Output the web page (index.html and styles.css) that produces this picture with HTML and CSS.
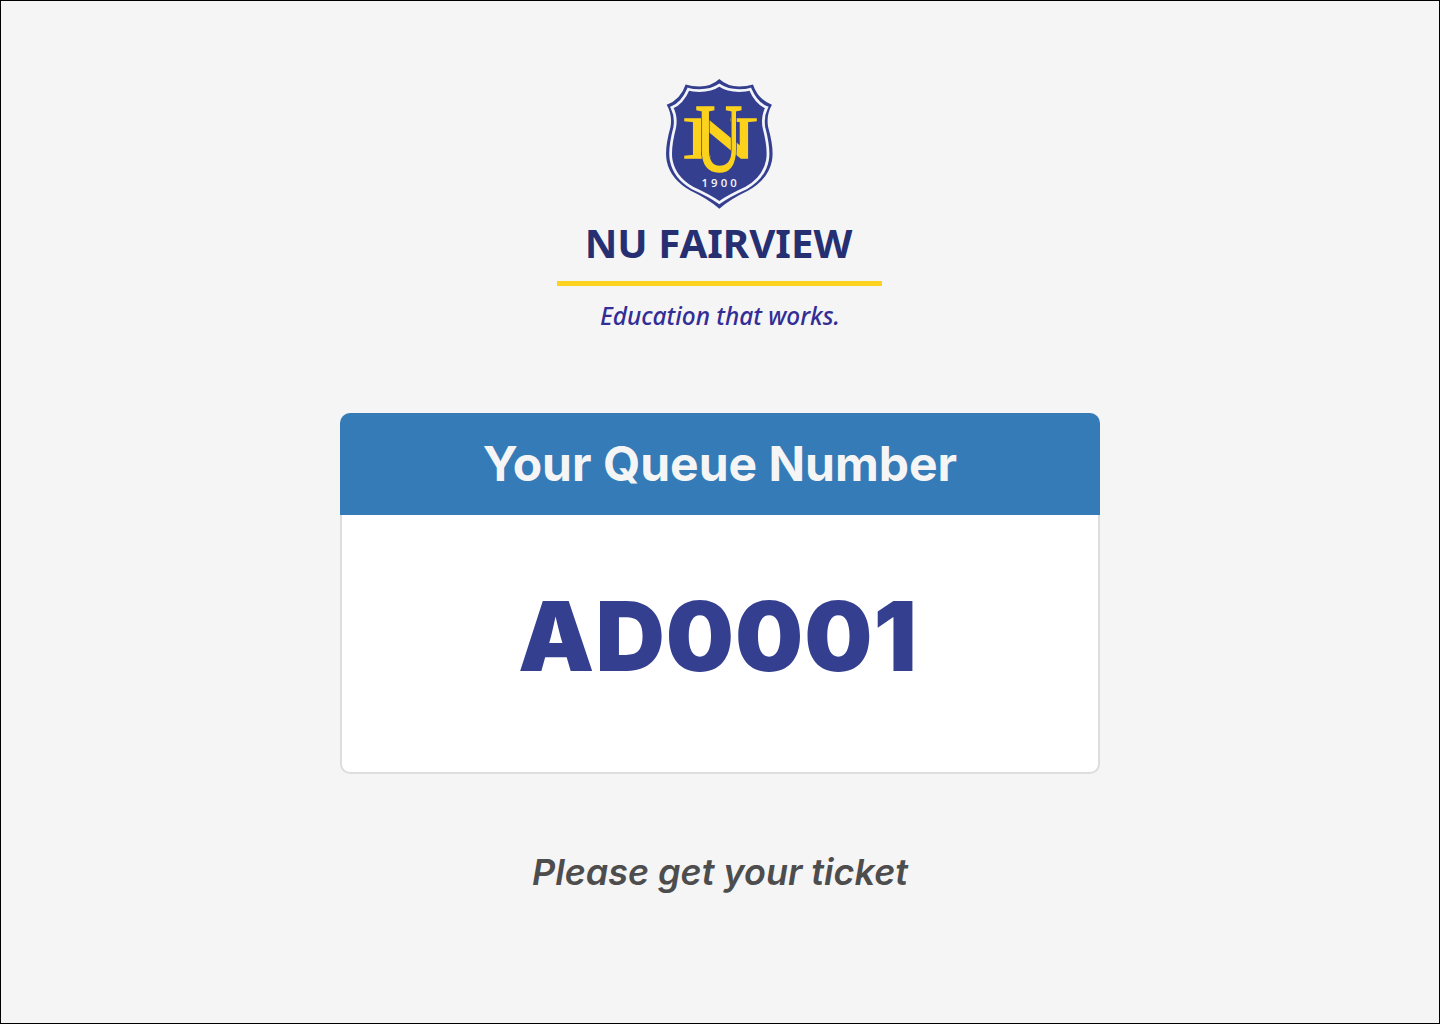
FILE: index.html
```html
<!DOCTYPE html>
<html lang="en">
<head>
    <meta charset="UTF-8">
    <meta name="viewport" content="width=device-width, initial-scale=1.0">
    <title>Your Queue Number</title>
    <link rel="stylesheet" href="styles.css">
</head>
<body>

    <div class="frame">
        <!-- School logo -->
        <div class="logo">
            <svg class="crest" viewBox="50 25 320 390" preserveAspectRatio="none" aria-label="NU crest">
                <path d="M208 28 Q185 50 150 50 Q128 50 110 44 Q96 88 55 104 Q72 135 66 170 Q48 235 55 270 Q66 325 125 358 Q175 382 208 411 Q241 382 291 358 Q350 325 361 270 Q368 235 350 170 Q344 135 361 104 Q320 88 306 44 Q288 50 266 50 Q231 50 208 28 Z" fill="#343f90"/>
                <path d="M208 46 Q185 62 150 62 Q130 62 118 58 Q100 100 70 112 Q84 140 78 172 Q62 235 68 268 Q78 320 130 350 Q178 372 208 393 Q238 372 286 350 Q338 320 348 268 Q354 235 338 172 Q332 140 346 112 Q316 100 298 58 Q286 62 266 62 Q231 62 208 46 Z" fill="none" stroke="#f4f5fa" stroke-width="8"/>
                <text class="crest-n" x="102" y="262" font-size="175" textLength="218" lengthAdjust="spacingAndGlyphs">N</text>
                <text class="crest-u-back" x="139" y="300" font-size="285" textLength="136" lengthAdjust="spacingAndGlyphs">U</text>
                <text class="crest-u" x="139" y="300" font-size="285" textLength="136" lengthAdjust="spacingAndGlyphs">U</text>
                <text class="crest-year" x="212" y="347" text-anchor="middle">1900</text>
            </svg>
            <div class="logo-name">NU FAIRVIEW</div>
            <div class="logo-line"></div>
            <div class="logo-tag">Education that works.</div>
        </div>

        <!-- Queue card -->
        <div class="card">
            <div class="card-head">Your Queue Number</div>
            <div class="card-body">AD0001</div>
        </div>

        <p class="hint">Please get your ticket</p>
    </div>

</body>
</html>
```

FILE: styles.css
```css
* {
    box-sizing: border-box;
}
body {
    margin: 0;
    font-family: 'Inter', sans-serif;
    background-color: #f5f5f5;
}
.frame {
    height: 1024px;
    padding-top: 77px;
    border: 1px solid #000;
    display: flex;
    flex-direction: column;
    align-items: center;
}
.logo {
    width: 326px;
    display: flex;
    flex-direction: column;
    align-items: center;
}
.crest {
    width: 110px;
    height: 132px;
}
.crest-n,
.crest-u,
.crest-u-back {
    font-family: 'Liberation Serif', serif;
    fill: #fcd21c;
    stroke: #fcd21c;
    stroke-width: 5px;
}
.crest-u-back {
    stroke: #343f90;
    stroke-width: 11px;
}
.crest-year {
    font-family: 'Open Sans', sans-serif;
    font-size: 33px;
    font-weight: 600;
    letter-spacing: 9px;
    fill: #f4f5fa;
}
.logo-name {
    margin-top: 8px;
    padding-right: 3px;
    font-family: 'Noto Sans', sans-serif;
    font-size: 40.2px;
    line-height: 50px;
    font-weight: 700;
    color: #262f72;
}
.logo-line {
    align-self: flex-start;
    width: 325px;
    height: 5px;
    margin-top: 13px;
    background-color: #fdd31f;
}
.logo-tag {
    margin-top: 14px;
    font-family: 'Noto Sans', sans-serif;
    font-size: 24.4px;
    line-height: 32px;
    font-style: italic;
    font-weight: 500;
    color: #332e96;
}
.card {
    width: 760px;
    margin-top: 81px;
    border-radius: 10px;
}
.card-head {
    height: 102px;
    background-color: #357bb7;
    border-radius: 10px 10px 0 0;
    color: #f5f5f5;
    font-size: 48px;
    font-weight: 700;
    line-height: 102px;
    text-align: center;
}
.card-body {
    height: 259px;
    padding-right: 4px;
    background-color: #fff;
    border: 2px solid #ddd;
    border-top: none;
    border-radius: 0 0 10px 10px;
    color: #343f90;
    font-size: 96px;
    font-weight: 900;
    letter-spacing: 1px;
    line-height: 242px;
    text-align: center;
}
.hint {
    margin: 74px 0 0;
    color: #4d4d4d;
    font-size: 36px;
    font-style: italic;
    font-weight: 600;
    line-height: 48px;
}
```
